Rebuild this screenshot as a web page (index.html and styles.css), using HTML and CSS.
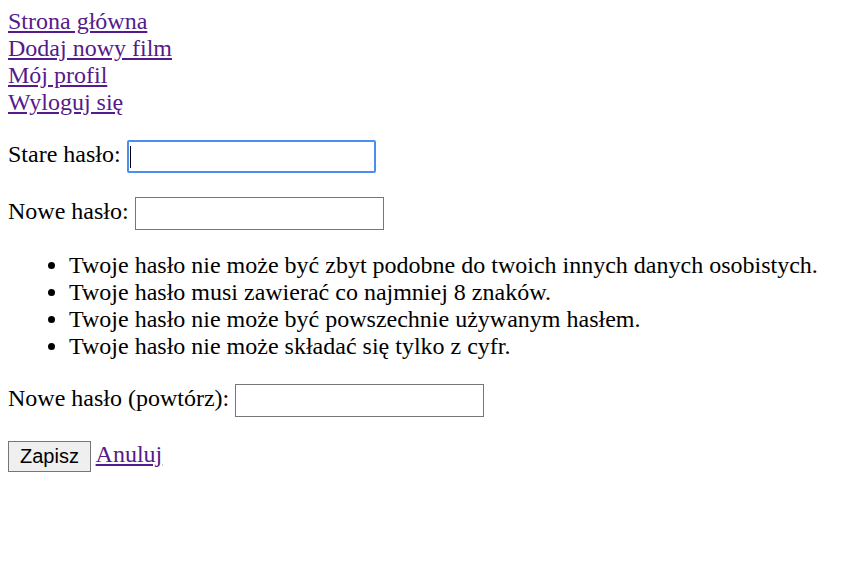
FILE: index.html
```html
<!DOCTYPE html>
<html lang="pl">
<head>
<meta charset="utf-8">
<title>Zmiana hasła</title>
<link rel="stylesheet" href="styles.css">
</head>
<body>
<nav class="nav">
<a href="#">Strona główna</a><br>
<a href="#">Dodaj nowy film</a><br>
<a href="#">Mój profil</a><br>
<a href="#">Wyloguj się</a>
</nav>
<form class="form">
<p class="row"><label>Stare hasło:</label> <span class="field-wrap"><input class="field field-focus" type="password"><span class="caret"></span></span></p>
<p class="row row-tight"><label>Nowe hasło:</label> <input class="field" type="password"></p>
<ul class="help">
<li>Twoje hasło nie może być zbyt podobne do twoich innych danych osobistych.</li>
<li>Twoje hasło musi zawierać co najmniej 8 znaków.</li>
<li>Twoje hasło nie może być powszechnie używanym hasłem.</li>
<li>Twoje hasło nie może składać się tylko z cyfr.</li>
</ul>
<p class="row"><label>Nowe hasło (powtórz):</label> <input class="field" type="password"></p>
<p class="row row-actions"><button class="btn" type="button">Zapisz</button> <a href="#">Anuluj</a></p>
</form>
</body>
</html>
```
FILE: styles.css
```css
html, body {
  margin: 0;
  background: #fff;
}
body {
  margin: 8px;
  font-family: "Liberation Serif", "Times New Roman", serif;
  font-size: 24px;
  line-height: 27px;
  color: #000;
}
a {
  color: #551a8b;
  text-decoration: underline;
}
.nav {
  display: block;
}
.form {
  margin: 0;
}
.row {
  margin: 24px 0;
}
.row-tight {
  margin-bottom: 22px;
}
.row-actions {
  margin-top: 23px;
}
.field-wrap {
  position: relative;
  display: inline-block;
  vertical-align: middle;
  line-height: 0;
}
.caret {
  position: absolute;
  left: 3px;
  top: 6px;
  width: 1px;
  height: 22px;
  background: #000;
}
.field {
  box-sizing: border-box;
  width: 249px;
  height: 33px;
  border: 1px solid #767676;
  border-radius: 0;
  padding: 2px 4px;
  vertical-align: middle;
  font-size: 20px;
  background: #fff;
}
.field-focus {
  border: 2px solid #4c8df0;
  border-radius: 2px;
}
.help {
  margin: 22px 0 24px;
  padding-left: 61px;
}
.btn {
  box-sizing: border-box;
  height: 31px;
  padding: 1px 11px;
  font-family: "Liberation Sans", Arial, sans-serif;
  font-size: 20px;
  color: #000;
  background: #efefef;
  border: 1px solid #767676;
  border-radius: 0;
  vertical-align: middle;
}
```
